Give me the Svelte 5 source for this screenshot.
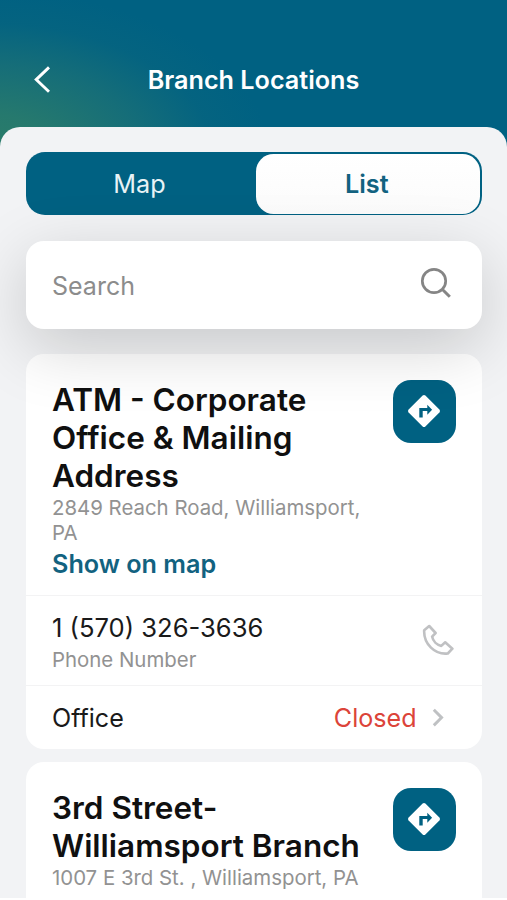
<script>
  const branches = [
    {
      name: ['ATM - Corporate', 'Office & Mailing', 'Address'],
      address: ['2849 Reach Road, Williamsport,', 'PA'],
      phone: '1 (570) 326-3636',
      status: 'Closed'
    },
    {
      name: ['3rd Street-', 'Williamsport Branch'],
      address: ['1007 E 3rd St. , Williamsport, PA'],
      phone: '',
      status: ''
    }
  ];
</script>

<div class="screen">
  <header>
    <svg class="back" width="20" height="30" viewBox="0 0 20 30" aria-label="Back">
      <path d="M17 2.4 4.2 14.6l12.8 12.2" fill="none" stroke="#fff" stroke-width="2.9" />
    </svg>
    <h1>Branch Locations</h1>
  </header>

  <main>
    <div class="tabs">
      <button>Map</button>
      <button class="active">List</button>
    </div>

    <div class="search">
      <span>Search</span>
      <svg width="32" height="32" viewBox="0 0 32 32" fill="none" stroke="#858585" stroke-width="2.7">
        <circle cx="14" cy="14" r="11.7" />
        <path d="m22.2 22.2 7.6 7.6" stroke-width="3" />
      </svg>
    </div>

    {#each branches as b}
      <article>
        <div class="top">
          <div class="info">
            <h2>{#each b.name as line}<span>{line}</span>{/each}</h2>
            <p class="address">{#each b.address as line}<span>{line}</span>{/each}</p>
            {#if b.phone}<a href="#map">Show on map</a>{/if}
          </div>
          <button class="directions" aria-label="Directions">
            <svg width="34" height="34" viewBox="0 0 34 34">
              <path d="M15.6 1.6q1.4-1.3 2.8 0l14 14q1.3 1.4 0 2.8l-14 14q-1.4 1.3-2.8 0l-14-14q-1.3-1.4 0-2.8z" fill="#fff" />
              <path d="M12.3 23.4v-9.4h8v-3.3l4.8 5-4.8 5v-3.7h-4.6v6.4z" fill="#006182" />
            </svg>
          </button>
        </div>
        {#if b.phone}
          <div class="row phone">
            <div>
              <div class="number">{b.phone}</div>
              <div class="caption">Phone Number</div>
            </div>
            <svg width="32" height="32" viewBox="0 0 32 32" fill="none" stroke="#c0c1c3" stroke-width="2.6" stroke-linejoin="round">
              <path d="M2.2 6.2 7.2 2l6.4 7-3.5 3.6C11 17.2 14.8 21 19.3 21.9l3.9-3.6 7.2 6.4-4.6 4.8C13.2 31 1.4 20 2.2 6.2z" />
            </svg>
          </div>
          <div class="row office">
            <span class="label">Office</span>
            <span class="status">{b.status}</span>
            <svg width="14" height="20" viewBox="0 0 14 20">
              <path d="m1.8 2.8 7.8 7.8-7.8 7.8" fill="none" stroke="#bfc1c3" stroke-width="2.9" />
            </svg>
          </div>
        {/if}
      </article>
    {/each}
  </main>
</div>

<style>
  :global(body) { margin: 0; background: #fff; overflow: hidden; }
  :global(*) { box-sizing: border-box; }
  .screen {
    height: 898px;
    overflow: hidden;
    font-family: Inter, "Liberation Sans", sans-serif;
    background:
      radial-gradient(ellipse 285px 165px at -15px 155px, #2c7d68 0%, rgba(41, 123, 108, .92) 25%, rgba(36, 118, 114, .6) 55%, rgba(20, 108, 122, .22) 80%, rgba(0, 97, 130, 0) 100%),
      #006182;
  }
  header {
    height: 126.5px;
    padding: 34px 32px 0;
    display: grid;
    grid-template-columns: 20px 1fr 20px;
    align-items: center;
  }
  h1 {
    margin: 0;
    text-align: center;
    color: #fff;
    font-size: 25.2px;
    line-height: 32px;
    font-weight: 600;
    white-space: nowrap;
  }
  main {
    height: 772px;
    padding: 25.5px 25.5px 0 26px;
    border-radius: 20px 20px 0 0;
    background: #f2f3f5;
    overflow: hidden;
  }
  button { border: 0; padding: 0; font-family: inherit; }
  .tabs {
    height: 63px;
    display: grid;
    grid-template-columns: 228px 1fr;
    padding: 1.5px;
    border-radius: 19px;
    background: #006182;
    overflow: hidden;
  }
  .tabs button { font-size: 25.2px; color: #e8f3f6; background: none; padding-right: 4px; }
  .tabs .active {
    color: #126280;
    background: linear-gradient(#fff, #fbfbfb);
    border-radius: 17.5px;
    font-weight: 600;
    padding-right: 2px;
  }
  .search {
    position: relative;
    z-index: 1;
    height: 88px;
    margin: 26px 0 25px;
    padding: 0 30px 4px 26px;
    display: flex;
    align-items: center;
    justify-content: space-between;
    border-radius: 18px;
    background: #fff;
    box-shadow: 0 18px 66px rgba(0, 0, 0, .18);
  }
  .search span { color: #8c8c8c; font-size: 25px; padding-top: 6px; }
  article {
    border-radius: 18px;
    background: #fff;
    margin-bottom: 13px;
  }
  .top {
    min-height: 240.5px;
    padding: 25.5px 25.5px 0 26px;
    display: flex;
    justify-content: space-between;
  }
  h2 {
    margin: 1px 0 0;
    font-size: 31.5px;
    line-height: 38px;
    font-weight: 600;
    color: #101010;
    white-space: nowrap;
  }
  h2 span, .address span { display: block; }
  .address {
    margin: 0;
    color: #929292;
    font-size: 20.4px;
    line-height: 25px;
    white-space: nowrap;
  }
  a {
    display: block;
    margin-top: 3px;
    color: #126280;
    font-size: 25.2px;
    line-height: 32px;
    font-weight: 600;
    text-decoration: none;
  }
  .directions {
    width: 63.5px;
    height: 63.5px;
    flex: none;
    display: grid;
    place-items: center;
    border-radius: 18px;
    background: #006182;
  }
  .row {
    display: flex;
    align-items: center;
    border-top: 1.5px solid #f3f3f4;
    padding: 0 26px;
  }
  .phone { height: 90px; justify-content: space-between; padding-right: 28px; }
  .number { color: #1a1a1a; font-size: 25.6px; line-height: 34px; padding-top: 5px; }
  .caption { color: #929292; font-size: 20.4px; line-height: 29px; }
  .office { height: 64.5px; padding-right: 36px; }
  .label { flex: 1; color: #1a1a1a; font-size: 25.1px; padding-top: 2px; }
  .status { color: #dc4439; font-size: 25.1px; margin-right: 15px; padding-top: 2px; }
</style>
